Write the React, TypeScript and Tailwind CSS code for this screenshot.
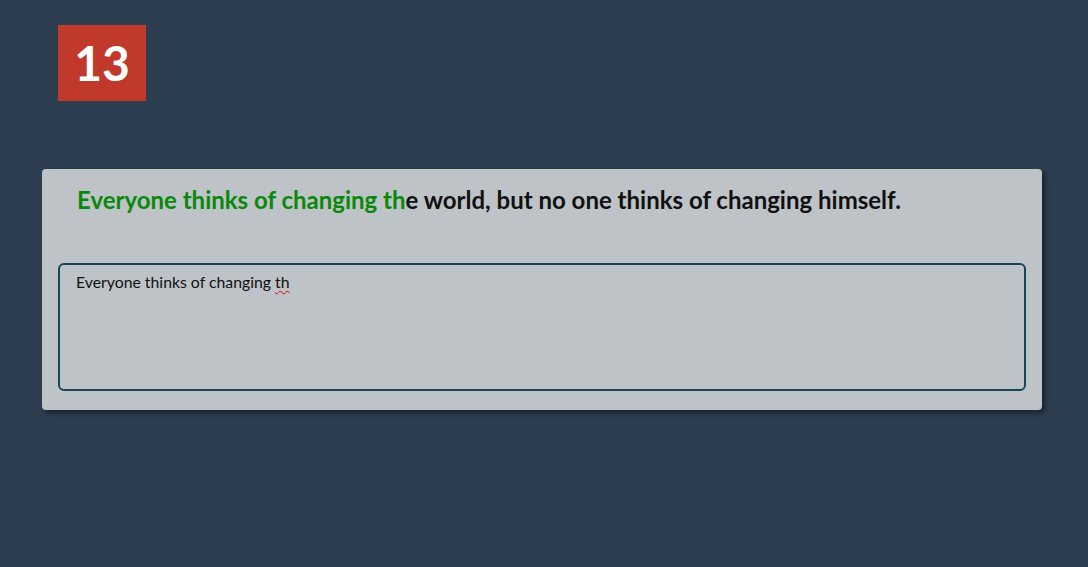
import { FC } from 'react';

const quote = 'Everyone thinks of changing the world, but no one thinks of changing himself.';
const typed = 'Everyone thinks of changing th';

const App: FC = () => {
  const done = quote.slice(0, typed.length);
  const rest = quote.slice(typed.length);

  return (
    <div className="min-h-screen bg-[#2c3e50] pl-[42px] pt-[25px] font-['Lato',sans-serif]">
      <div className="ml-4 flex h-[76px] w-[88px] items-center justify-center bg-[#c0392b] text-[48px] font-bold text-white">
        13
      </div>

      <div className="mt-[68px] w-[1000px] rounded bg-[#bdc3c7] px-4 pb-[19px] pt-4 shadow-[3px_3px_5px_rgba(0,0,0,0.45)]">
        <h1 className="px-[19px] text-[24px] font-bold leading-[29px] text-[#111]">
          <span className="text-[#0b880b]">{done}</span>
          {rest}
        </h1>

        <div className="mt-[49px] h-[128px] rounded-md border-2 border-[#1a4558] px-4 pt-2 text-[15.8px] leading-[18px] text-[#111]">
          Everyone thinks of changing{' '}
          <span className="underline decoration-wavy decoration-red-600 decoration-1 underline-offset-2">th</span>
        </div>
      </div>
    </div>
  );
};

export default App;
